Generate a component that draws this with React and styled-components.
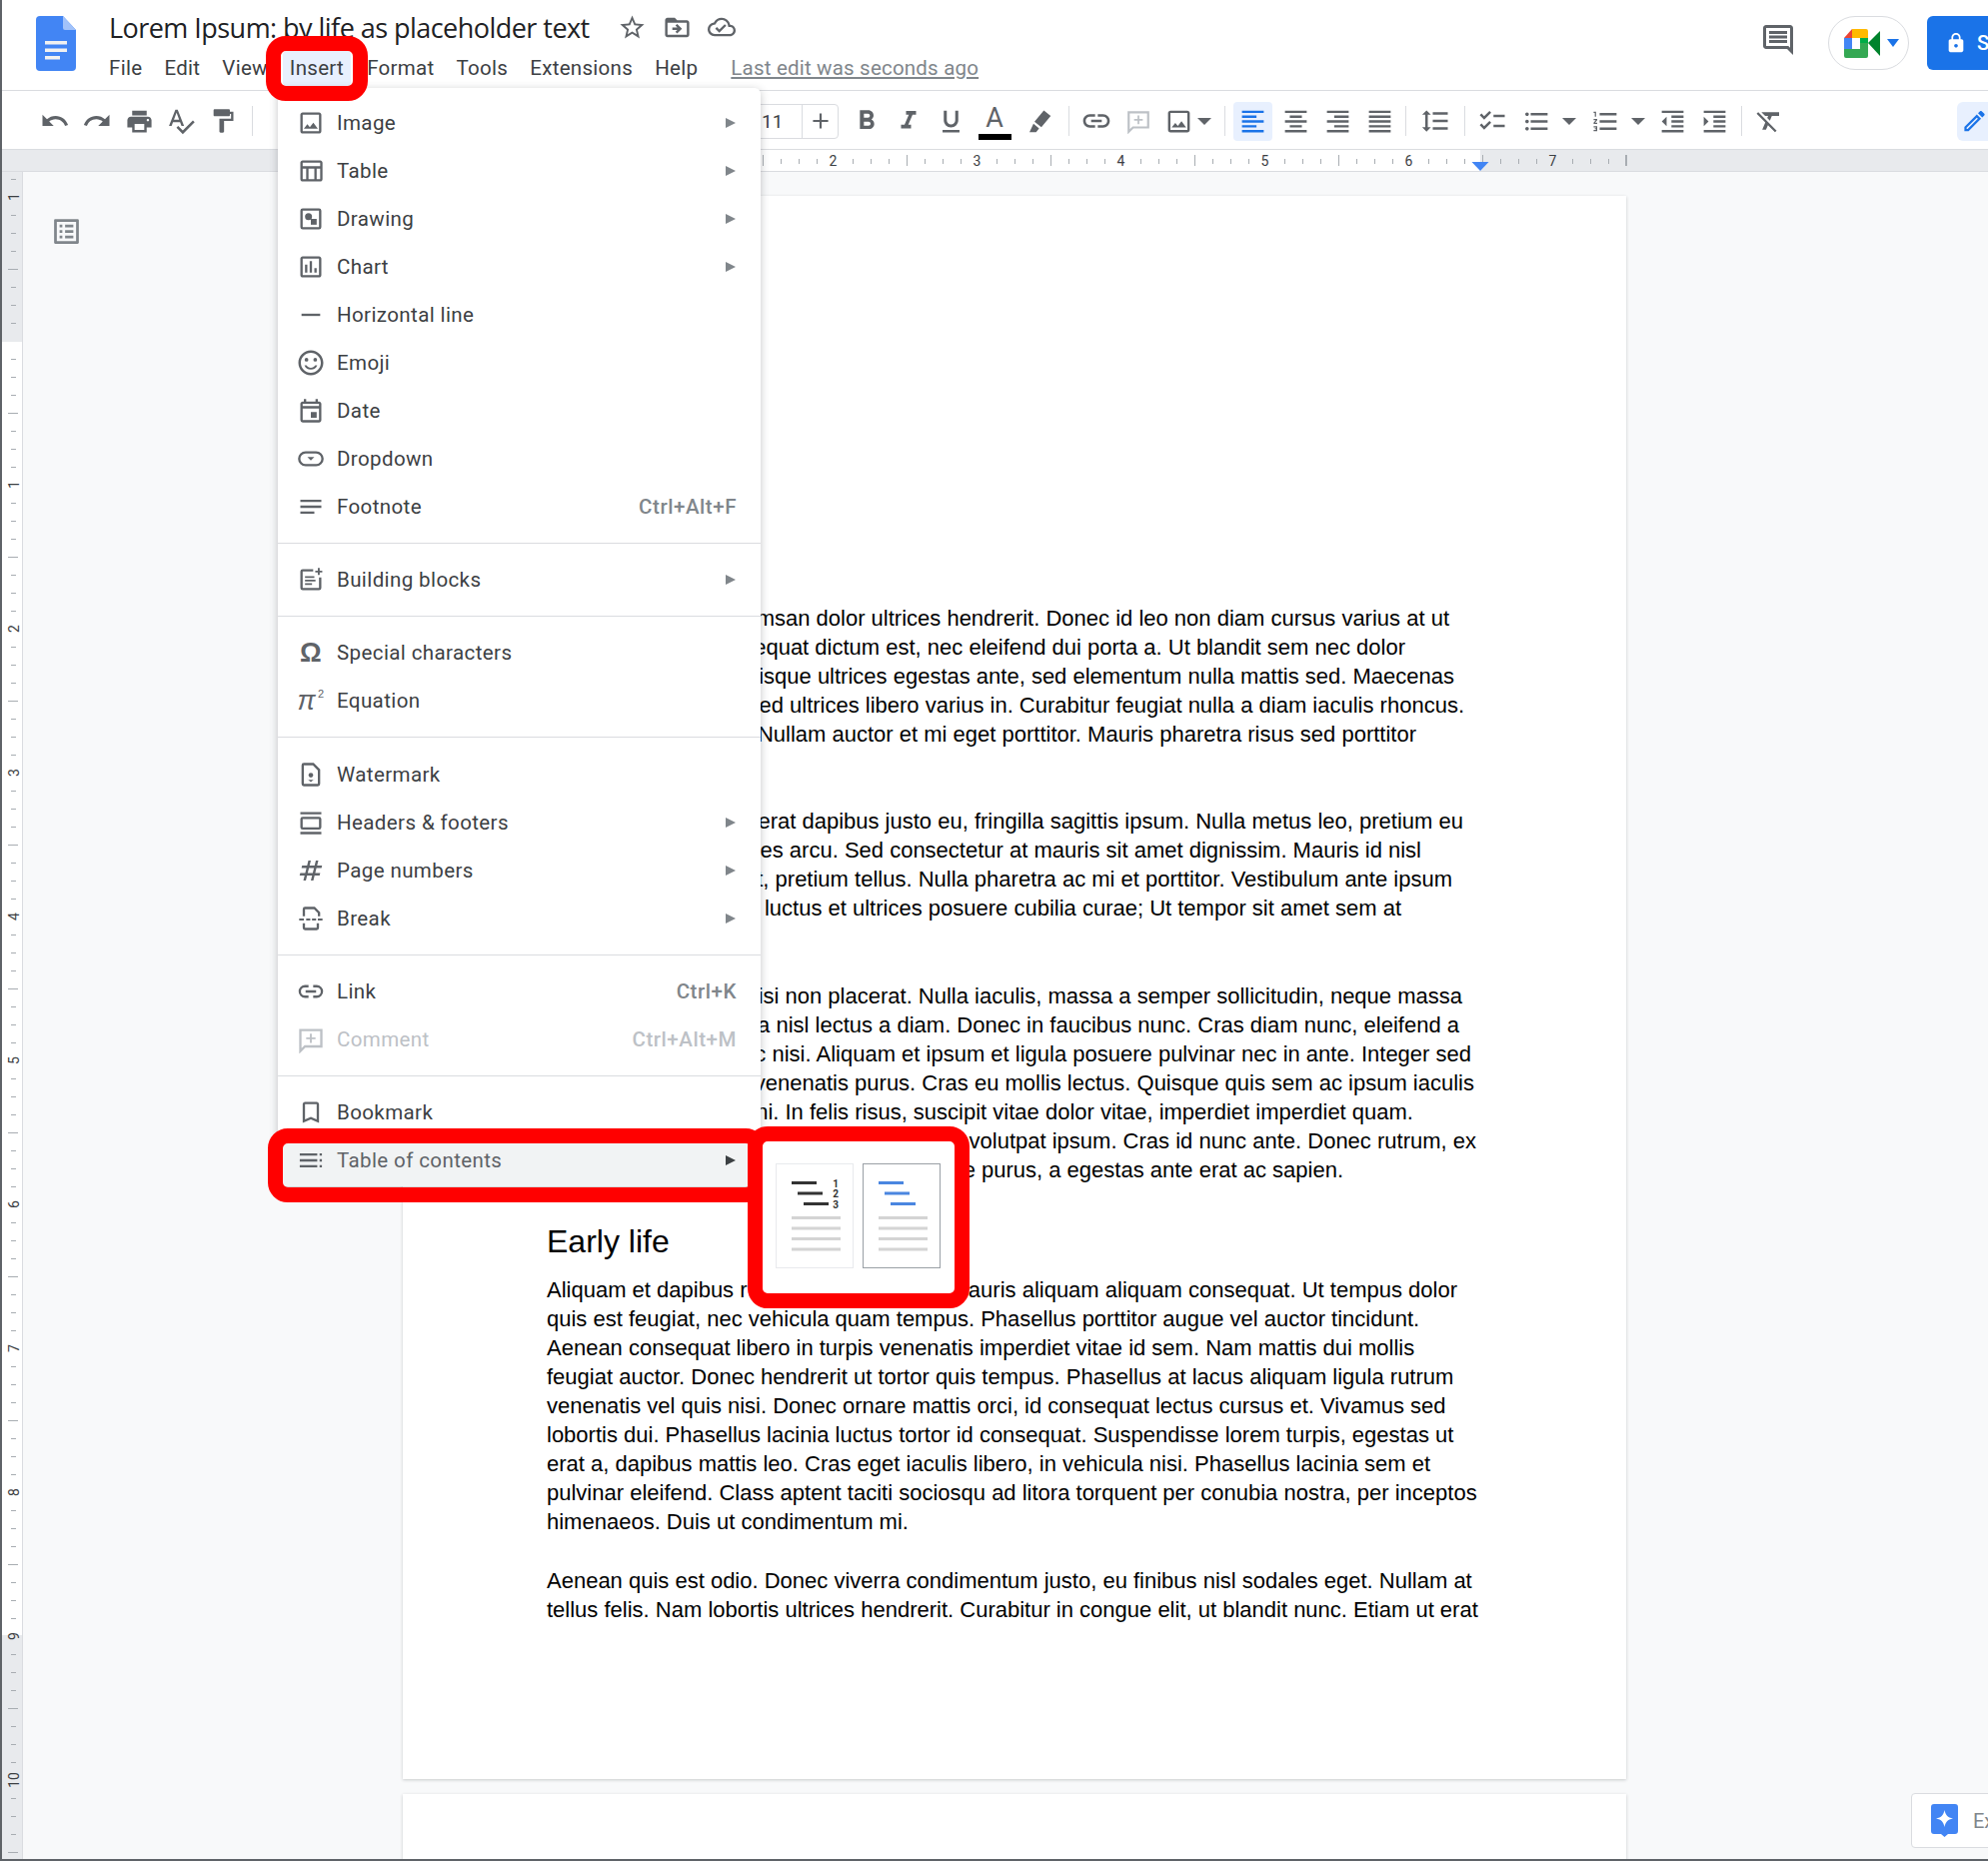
import React from "react";
import styled, { createGlobalStyle } from "styled-components";
import {
  MdUndo, MdRedo, MdPrint, MdSpellcheck, MdFormatPaint, MdFormatBold, MdFormatItalic,
  MdFormatUnderlined, MdLink, MdOutlineImage, MdFormatAlignLeft, MdFormatAlignCenter,
  MdFormatAlignRight, MdFormatAlignJustify, MdFormatLineSpacing, MdChecklist,
  MdFormatListBulleted, MdFormatListNumbered, MdFormatIndentDecrease, MdFormatIndentIncrease,
  MdFormatClear, MdStarBorder, MdDriveFileMoveOutline, MdOutlineCloudDone, MdOutlineComment,
  MdOutlineEdit, MdLock, MdOutlineListAlt, MdOutlineTableChart, MdOutlineInsertChart,
  MdHorizontalRule, MdOutlineSentimentSatisfied, MdOutlineEvent, MdNotes, MdNumbers,
  MdOutlineBookmarkBorder, MdAdd,
} from "react-icons/md";

const GlobalStyle = createGlobalStyle`
  html, body {
    margin: 0;
    padding: 0;
    overflow: hidden;
    background: #f8f9fa;
  }
  * { box-sizing: border-box; }
`;

const Screen = styled.div`
  position: relative;
  width: 1989px;
  height: 1862px;
  overflow: hidden;
  display: flex;
  flex-direction: column;
  background: #f8f9fa;
  border-left: 2px solid #5f6368;
  border-bottom: 2px solid #5f6368;
  font-family: Roboto, "Liberation Sans", sans-serif;
`;

/* title bar */
const TopBar = styled.header`
  flex: none;
  height: 91px;
  display: flex;
  background: #fff;
  border-bottom: 1px solid #dadce0;
  padding: 16px 0 0 34px;
`;

const TitleCol = styled.div`
  margin-left: 33px;
  display: flex;
  flex-direction: column;
`;

const TitleRow = styled.div`
  display: flex;
  align-items: center;
  height: 24px;
  margin-top: -1px;
  margin-bottom: 1px;
  color: #5f6368;
`;

const Title = styled.div`
  font: 400 27px "Open Sans", sans-serif;
  letter-spacing: -0.54px;
  color: #202124;
  margin-right: 20px;
  white-space: nowrap;
`;

const TitleIcon = styled.span`
  width: 45px;
  display: flex;
  justify-content: center;
`;

const MenuBar = styled.nav`
  display: flex;
  align-items: center;
  margin: 11px 0 0 -7px;
`;

const MenuItem = styled.div`
  height: 35px;
  line-height: 35px;
  padding: 0 7px;
  margin-right: ${(p) => (p.$open ? 9 : 8)}px;
  border-radius: 4px;
  font-size: 20.5px;
  letter-spacing: 0.3px;
  color: #3c4043;
  background: ${(p) => (p.$open ? "#e8f0fe" : "transparent")};
`;

const LastEdit = styled.div`
  margin: -2px 0 0 18px;
  font-size: 20.5px;
  letter-spacing: 0.2px;
  color: #80868b;
  text-decoration: underline;
  white-space: nowrap;
`;

const TopRight = styled.div`
  margin-left: auto;
  display: flex;
  align-items: flex-start;
  color: #5f6368;
`;

const CommentIcon = styled.div`
  margin: 6px 32px 0 0;
  display: flex;
`;

const MeetButton = styled.div`
  width: 81px;
  height: 54px;
  border: 1px solid #dadce0;
  border-radius: 27px;
  background: #fff;
  display: flex;
  align-items: center;
  padding-left: 15px;
  gap: 7px;
`;

const ShareButton = styled.div`
  width: 61px;
  margin-left: 18px;
  height: 54px;
  border-radius: 6px 0 0 6px;
  background: #1a73e8;
  color: #fff;
  display: flex;
  align-items: center;
  padding-left: 18px;
  gap: 10px;
  font-size: 20px;
  font-weight: 500;
  white-space: nowrap;

  svg {
    flex: none;
  }
`;

/* format toolbar */
const Toolbar = styled.div`
  flex: none;
  height: 59px;
  display: flex;
  align-items: center;
  padding: 2px 0 0 32px;
  background: #fff;
  border-bottom: 1px solid #dadce0;
  color: #5f6368;
`;

const ToolBtn = styled.div`
  flex: none;
  width: ${(p) => p.$w || 42}px;
  height: 39px;
  margin-left: ${(p) => p.$ml || 0}px;
  display: flex;
  align-items: center;
  justify-content: center;
  border-radius: 4px;
  color: ${(p) => (p.$active ? "#1a73e8" : p.$muted ? "#bdc1c6" : "#5f6368")};
  background: ${(p) => (p.$active ? "#e8f0fe" : "transparent")};
`;

const Sep = styled.div`
  flex: none;
  width: 1px;
  height: 30px;
  margin-left: ${(p) => p.$ml || 0}px;
  background: #dadce0;
`;

const Caret = styled.div`
  flex: none;
  width: 0;
  height: 0;
  margin-left: ${(p) => p.$ml || 0}px;
  border-left: 7px solid transparent;
  border-right: 7px solid transparent;
  border-top: 7px solid #5f6368;
`;

const FontBox = styled.div`
  flex: none;
  width: 119px;
  height: 35px;
  margin-left: 467px;
  display: flex;
  border: 1px solid #dadce0;
  border-radius: 4px;
  color: #3c4043;
`;

const FontValue = styled.div`
  width: 82px;
  padding-left: 41px;
  line-height: 33px;
  font-size: 19px;
  border-right: 1px solid #dadce0;
`;

const FontPlus = styled.div`
  flex: 1;
  display: flex;
  align-items: center;
  justify-content: center;
  color: #5f6368;
`;

const ColorBtn = styled(ToolBtn)`
  flex-direction: column;
  justify-content: flex-start;
  font-size: 27px;
  line-height: 32px;
`;

const ColorBar = styled.div`
  width: 33px;
  height: 6px;
  background: #000;
`;

const PencilBtn = styled.div`
  margin-left: auto;
  width: 31px;
  height: 39px;
  padding-left: 4px;
  display: flex;
  align-items: center;
  border-radius: 6px 0 0 6px;
  background: #e8f0fe;
  color: #1a73e8;
`;

const RulerStrip = styled.svg`
  flex: none;
  display: block;
`;

/* page area */
const Main = styled.div`
  flex: 1;
  min-height: 0;
  display: flex;
  overflow: hidden;
`;

const OutlineCol = styled.div`
  flex: none;
  width: 380px;
  padding: 43px 0 0 27px;
  color: #80868b;
`;

const Pages = styled.div`
  flex: none;
  width: 1224px;
  padding-top: 24px;
  display: flex;
  flex-direction: column;
  gap: 15px;
`;

const Sheet = styled.div`
  flex: none;
  height: ${(p) => p.$h}px;
  padding: ${(p) => p.$top || 0}px 0 0 144px;
  background: #fff;
  box-shadow: 0 1px 3px rgba(60, 64, 67, 0.25);
  font: 22px/29.1px "Liberation Sans", Arial, sans-serif;
  color: #000;
`;

const Paragraph = styled.div`
  margin-bottom: ${(p) => p.$after || 0}px;
`;

const Line = styled.div`
  white-space: nowrap;
  height: 29.1px;
  width: ${(p) => (p.$end ? `${p.$end}px` : "auto")};
  text-align: ${(p) => (p.$end ? "right" : "left")};
`;

const SplitLine = styled(Line)`
  display: flex;
  justify-content: space-between;
`;

const Heading = styled.h2`
  margin: 36px 0 12.3px;
  font: 400 32px/42px "Liberation Sans", Arial, sans-serif;
`;

/* insert menu */
const Menu = styled.div`
  position: absolute;
  left: 276px;
  top: 88px;
  width: 483px;
  padding-top: 11px;
  background: #fff;
  border-radius: 6px;
  box-shadow: 0 2px 8px rgba(60, 64, 67, 0.3);
  z-index: 3;
`;

const Row = styled.div`
  height: ${(p) => (p.$selected ? 50 : 48)}px;
  padding: ${(p) => (p.$selected ? "0 24px 2px 12px" : "0 24px 0 12px")};
  display: flex;
  align-items: center;
  background: ${(p) => (p.$selected ? "#f1f3f4" : "transparent")};
  color: ${(p) => (p.$disabled ? "#bdc1c6" : p.$selected ? "#5f6368" : "#3c4043")};
  font-size: 20.5px;
  letter-spacing: 0.4px;
`;

const RowIcon = styled.span`
  flex: none;
  width: 42px;
  margin-right: 5px;
  display: flex;
  align-items: center;
  justify-content: center;
  color: ${(p) => (p.$disabled ? "#bdc1c6" : "#5f6368")};
`;

const GlyphIcon = styled.span`
  font: ${(p) => p.$font};
  line-height: 28px;
`;

const SmallSup = styled.span`
  font: 11px "Liberation Sans", sans-serif;
  vertical-align: 12px;
  margin-left: 2px;
`;

const RowLabel = styled.span`
  flex: 1;
  white-space: nowrap;
`;

const Shortcut = styled.span`
  font-weight: 500;
  letter-spacing: 0.55px;
  color: ${(p) => (p.$disabled ? "#bdc1c6" : "#80868b")};
`;

const SubArrow = styled.span`
  width: 0;
  height: 0;
  margin-right: 1px;
  border-top: 5px solid transparent;
  border-bottom: 5px solid transparent;
  border-left: 10px solid ${(p) => (p.$dark ? "#3c4043" : "#80868b")};
`;

const MenuDivider = styled.div`
  height: 1px;
  margin: 12.1px 0;
  background: #dadce0;
`;

/* red annotation frames */
const RedFrame = styled.div`
  position: absolute;
  left: ${(p) => p.$x}px;
  top: ${(p) => p.$y}px;
  width: ${(p) => p.$w}px;
  height: ${(p) => p.$h}px;
  border: 15px solid #f00;
  border-radius: 20px;
  z-index: 4;
`;

const TocPanel = styled(RedFrame)`
  z-index: 5;
  background: #fff;
  padding: 22px 0 0 13px;
  display: flex;
  gap: 9px;
  align-items: flex-start;
`;

const Thumb = styled.div`
  width: 78px;
  height: 105px;
  border: 1px solid ${(p) => (p.$active ? "#9aa0a6" : "#e8eaed")};
  display: flex;
`;

const ExploreBox = styled.div`
  position: absolute;
  left: 1910px;
  top: 1794px;
  width: 120px;
  height: 55px;
  background: #fff;
  border: 1px solid #dadce0;
  border-radius: 4px;
  display: flex;
  align-items: center;
  padding-left: 19px;
  gap: 15px;
  font-size: 20px;
  color: #80868b;
  z-index: 2;
`;

function Svg({ children, size = 28 }) {
  return (
    <svg width={size} height={size} viewBox="0 0 24 24" fill="currentColor">
      {children}
    </svg>
  );
}

const line = { fill: "none", stroke: "currentColor", strokeWidth: 2 };

const DrawingIcon = () => (
  <Svg>
    <rect x="4" y="4" width="16" height="16" rx="1" {...line} />
    <circle cx="10" cy="10" r="3" />
    <rect x="12" y="12" width="5" height="5" />
  </Svg>
);
const DropdownIcon = () => (
  <Svg>
    <rect x="2" y="6.5" width="20" height="11" rx="5.5" {...line} />
    <path d="M9 10.5h6l-3 3z" />
  </Svg>
);
const BlocksIcon = () => (
  <Svg>
    <path d="M14 4H5a1 1 0 0 0-1 1v14a1 1 0 0 0 1 1h14a1 1 0 0 0 1-1v-9" {...line} />
    <path d="M7 9h8v1.6H7zM7 12h9v1.6H7zM7 15h6v1.6H7zM18 2h1.6v2.2h2.2v1.6h-2.2V8H18V5.800h-2.200V4.200H18z" />
  </Svg>
);
const WatermarkIcon = () => (
  <Svg>
    <path d="M6 3h8l5 5v12a1 1 0 0 1-1 1H6a1 1 0 0 1-1-1V4a1 1 0 0 1 1-1z" {...line} />
    <circle cx="12" cy="12.500" r="2" />
    <path d="M8.500 15.500 12 18.500l3.500-3-1.500 1H10z" />
  </Svg>
);
const HeadersIcon = () => (
  <Svg>
    <path d="M3 3h18v2H3zM3 20h18v2H3z" />
    <rect x="4" y="8" width="16" height="9" rx="1" {...line} />
  </Svg>
);
const BreakIcon = () => (
  <Svg>
    <path d="M6 10V4a1 1 0 0 1 1-1h8l4 4v3" {...line} />
    <path d="M6 16v4a1 1 0 0 0 1 1h10a1 1 0 0 0 1-1v-4" {...line} />
    <path d="M2 12h4v1.800H2zM8 12h3.500v1.800H8zM13 12h3.500v1.800H13zM18 12h4v1.800h-4z" />
  </Svg>
);
const LinkIcon = () => (
  <Svg>
    <path d="M10 7.500H7a4.500 4.500 0 0 0 0 9h3M14 7.500h3a4.500 4.500 0 0 1 0 9h-3M7.500 12h9" {...line} />
  </Svg>
);
const CommentAddIcon = ({ size = 28 }) => (
  <Svg size={size}>
    <path d="M3 4h18v14H7l-4 4z" {...line} />
    <path d="M11.200 7h1.600v3.200H16v1.600h-3.200V15h-1.600v-3.200H8v-1.600h3.200z" />
  </Svg>
);
const TocIcon = () => (
  <Svg>
    <path d="M2.500 6h15v2h-15zM2.500 11h15v2h-15zM2.500 16h15v2h-15zM19.500 6h2v2h-2zM19.500 11h2v2h-2zM19.500 16h2v2h-2z" />
  </Svg>
);
const MarkerIcon = () => (
  <Svg size={30}>
    <path d="M15.500 3.500 21 8l-7.500 9-5.500-4.500zM7.200 14.200l4.500 3.700-2.400 3H4z" />
  </Svg>
);

const DocsLogo = () => (
  <svg width="40" height="55" viewBox="0 0 40 55" style={{ flex: "none" }}>
    <path d="M4 0h23l13 14v37a4 4 0 0 1-4 4H4a4 4 0 0 1-4-4V4a4 4 0 0 1 4-4z" fill="#4285f4" />
    <path d="M27 0l13 14H29a2 2 0 0 1-2-2z" fill="#a1c2fa" />
    <path d="M9 25h22v3.500H9zM9 32.500h22V36H9zM9 40h15v3.500H9z" fill="#f1f1f1" />
  </svg>
);

const MeetLogo = () => (
  <svg width="36" height="29" viewBox="0 0 36 29">
    <path d="M8 0h14a2 2 0 0 1 2 2v11l-8 0V9H8z" fill="#ffba00" />
    <path d="M0 9l8-9v9z" fill="#ea4335" />
    <rect y="9" width="8" height="11" fill="#4285f4" />
    <path d="M0 20h16v-7h8v14a2 2 0 0 1-2 2H2a2 2 0 0 1-2-2z" fill="#34a853" />
    <path d="M24 14l12-12v25z" fill="#00832d" />
    <path d="M16 9h8v5h-8z" fill="#00ac47" />
    <rect x="8" y="9" width="8" height="11" fill="#fff" />
  </svg>
);

const ExploreIcon = () => (
  <svg width="27" height="33" viewBox="0 0 27 33" style={{ flex: "none" }}>
    <path d="M3 0h21a3 3 0 0 1 3 3v24a3 3 0 0 1-3 3h-7l-3.500 3L10 30H3a3 3 0 0 1-3-3V3a3 3 0 0 1 3-3z" fill="#4285f4" />
    <path d="M13.500 6c1 5 3 7.500 8.500 8.500-5.500 1-7.500 3.500-8.500 8.500-1-5-3-7.500-8.500-8.500C10.500 13.500 12.500 11 13.500 6z" fill="#fff" />
  </svg>
);

function ThumbArt({ numbered }) {
  const colour = numbered ? "#333" : "#4a86e0";
  return (
    <svg width="76" height="103" viewBox="0 0 76 103">
      <rect x="15" y="17" width="25" height="3" fill={colour} />
      <rect x="21" y="27.500" width="25" height="3" fill={colour} />
      <rect x="27" y="38" width="25" height="3" fill={colour} />
      {numbered && (
        <g fontFamily="Roboto" fontWeight="700" fontSize="10" fill="#333" textAnchor="middle">
          <text x="59" y="22.500">1</text>
          <text x="59" y="33">2</text>
          <text x="59" y="43.500">3</text>
        </g>
      )}
      {[52, 62.500, 73, 83.500].map((y) => (
        <rect key={y} x="15" y={y} width="49" height="3" fill="#d4d4d4" />
      ))}
    </svg>
  );
}

function HorizontalRuler() {
  const ticks = [];
  for (let x = 403; x <= 1627; x += 18) {
    const step = (x - 547) / 18;
    const mod = ((step % 8) + 8) % 8;
    if (mod === 0) continue;
    const long = mod === 4;
    ticks.push(<rect key={x} x={x} y={long ? 5 : 9} width="1" height={long ? 11 : 5} fill="#a8adb2" />);
  }
  return (
    <RulerStrip width="1987" height="22" viewBox="2 150 1987 22" preserveAspectRatio="xMinYMin">
      <g transform="translate(0 150)">
        <rect x="0" width="1989" height="21" fill="#e8eaed" />
        <rect x="547" width="934" height="21" fill="#fff" />
        <rect y="21" x="0" width="1989" height="1" fill="#dadce0" />
        {ticks}
        <rect x="1626" y="5" width="1" height="11" fill="#a8adb2" />
        {[1, 2, 3, 4, 5, 6, 7].map((n) => (
          <text key={n} x={545.5 + n * 144} y="16" fontFamily="Roboto" fontSize="14" fill="#3c4043" textAnchor="middle">
            {n}
          </text>
        ))}
        <path d="M1472.500 12h17l-8.500 9z" fill="#4285f4" />
      </g>
    </RulerStrip>
  );
}

function VerticalRuler() {
  const ticks = [];
  for (let y = 179; y <= 1860; y += 18) {
    const mod = ((y - 341) / 18 % 8 + 8) % 8;
    if (mod === 0) continue;
    const long = mod === 4;
    ticks.push(<rect key={y} x={long ? 8 : 11} y={y} width={long ? 10 : 5} height="1" fill="#a8adb2" />);
  }
  const labels = [[197, 1]];
  for (let n = 1; n <= 10; n++) labels.push([341 + n * 144, n]);
  return (
    <RulerStrip width="21" height="1688" viewBox="2 172 21 1688" style={{ alignSelf: "flex-start" }}>
      <rect x="0" y="172" width="22" height="1700" fill="#e8eaed" />
      <rect x="2" y="342" width="20" height="1294" fill="#fff" />
      <rect x="22" y="172" width="1" height="1700" fill="#dadce0" />
      {ticks}
      {labels.map(([y, n]) => (
        <text
          key={y}
          transform={`translate(19 ${y}) rotate(-90)`}
          fontFamily="Roboto"
          fontSize="14"
          fill="#3c4043"
          textAnchor="middle"
        >
          {n}
        </text>
      ))}
    </RulerStrip>
  );
}

const menuGroups = [
  [
    { label: "Image", icon: <MdOutlineImage size={28} />, sub: true },
    { label: "Table", icon: <MdOutlineTableChart size={28} />, sub: true },
    { label: "Drawing", icon: <DrawingIcon />, sub: true },
    { label: "Chart", icon: <MdOutlineInsertChart size={28} />, sub: true },
    { label: "Horizontal line", icon: <MdHorizontalRule size={28} /> },
    { label: "Emoji", icon: <MdOutlineSentimentSatisfied size={30} /> },
    { label: "Date", icon: <MdOutlineEvent size={28} /> },
    { label: "Dropdown", icon: <DropdownIcon /> },
    { label: "Footnote", icon: <MdNotes size={28} />, shortcut: "Ctrl+Alt+F" },
  ],
  [{ label: "Building blocks", icon: <BlocksIcon />, sub: true }],
  [
    { label: "Special characters", icon: <GlyphIcon $font={'700 27px "Liberation Sans", sans-serif'}>Ω</GlyphIcon> },
    {
      label: "Equation",
      icon: (
        <GlyphIcon $font={'italic 27px "Liberation Sans", sans-serif'}>
          π<SmallSup>2</SmallSup>
        </GlyphIcon>
      ),
    },
  ],
  [
    { label: "Watermark", icon: <WatermarkIcon /> },
    { label: "Headers & footers", icon: <HeadersIcon />, sub: true },
    { label: "Page numbers", icon: <MdNumbers size={30} />, sub: true },
    { label: "Break", icon: <BreakIcon />, sub: true },
  ],
  [
    { label: "Link", icon: <LinkIcon />, shortcut: "Ctrl+K" },
    { label: "Comment", icon: <CommentAddIcon />, shortcut: "Ctrl+Alt+M", disabled: true },
  ],
  [
    { label: "Bookmark", icon: <MdOutlineBookmarkBorder size={28} /> },
    { label: "Table of contents", icon: <TocIcon />, sub: true, selected: true },
  ],
];

const textBlocks = [
  [
    ["msan dolor ultrices hendrerit. Donec id leo non diam cursus varius at ut", 903],
    ["equat dictum est, nec eleifend dui porta a. Ut blandit sem nec dolor", 859],
    ["isque ultrices egestas ante, sed elementum nulla mattis sed. Maecenas", 908],
    ["ed ultrices libero varius in. Curabitur feugiat nulla a diam iaculis rhoncus.", 918],
    ["Nullam auctor et mi eget porttitor. Mauris pharetra risus sed porttitor", 870],
  ],
  [
    ["erat dapibus justo eu, fringilla sagittis ipsum. Nulla metus leo, pretium eu", 917],
    ["es arcu. Sed consectetur at mauris sit amet dignissim. Mauris id nisl", 875],
    ["t, pretium tellus. Nulla pharetra ac mi et porttitor. Vestibulum ante ipsum", 906],
    ["luctus et ultrices posuere cubilia curae; Ut tempor sit amet sem at", 855],
  ],
  [
    ["isi non placerat. Nulla iaculis, massa a semper sollicitudin, neque massa", 916],
    ["a nisl lectus a diam. Donec in faucibus nunc. Cras diam nunc, eleifend a", 913],
    ["c nisi. Aliquam et ipsum et ligula posuere pulvinar nec in ante. Integer sed", 925],
    ["venenatis purus. Cras eu mollis lectus. Quisque quis sem ac ipsum iaculis", 928],
    ["ni. In felis risus, suscipit vitae dolor vitae, imperdiet imperdiet quam.", 867],
    ["volutpat ipsum. Cras id nunc ante. Donec rutrum, ex", 930],
    ["e purus, a egestas ante erat ac sapien.", 797],
  ],
];

const earlyLife = [
  "quis est feugiat, nec vehicula quam tempus. Phasellus porttitor augue vel auctor tincidunt.",
  "Aenean consequat libero in turpis venenatis imperdiet vitae id sem. Nam mattis dui mollis",
  "feugiat auctor. Donec hendrerit ut tortor quis tempus. Phasellus at lacus aliquam ligula rutrum",
  "venenatis vel quis nisi. Donec ornare mattis orci, id consequat lectus cursus et. Vivamus sed",
  "lobortis dui. Phasellus lacinia luctus tortor id consequat. Suspendisse lorem turpis, egestas ut",
  "erat a, dapibus mattis leo. Cras eget iaculis libero, in vehicula nisi. Phasellus lacinia sem et",
  "pulvinar eleifend. Class aptent taciti sociosqu ad litora torquent per conubia nostra, per inceptos",
  "himenaeos. Duis ut condimentum mi.",
];

const lastLines = [
  "Aenean quis est odio. Donec viverra condimentum justo, eu finibus nisl sodales eget. Nullam at",
  "tellus felis. Nam lobortis ultrices hendrerit. Curabitur in congue elit, ut blandit nunc. Etiam ut erat",
];

export default function App() {
  return (
    <Screen>
      <GlobalStyle />
      <TopBar>
        <DocsLogo />
        <TitleCol>
          <TitleRow>
            <Title>Lorem Ipsum: by life as placeholder text</Title>
            <TitleIcon><MdStarBorder size={29} /></TitleIcon>
            <TitleIcon><MdDriveFileMoveOutline size={29} /></TitleIcon>
            <TitleIcon><MdOutlineCloudDone size={28} /></TitleIcon>
          </TitleRow>
          <MenuBar>
            <MenuItem>File</MenuItem>
            <MenuItem>Edit</MenuItem>
            <MenuItem>View</MenuItem>
            <MenuItem $open>Insert</MenuItem>
            <MenuItem>Format</MenuItem>
            <MenuItem>Tools</MenuItem>
            <MenuItem>Extensions</MenuItem>
            <MenuItem>Help</MenuItem>
            <LastEdit>Last edit was seconds ago</LastEdit>
          </MenuBar>
        </TitleCol>
        <TopRight>
          <CommentIcon><MdOutlineComment size={36} /></CommentIcon>
          <MeetButton>
            <MeetLogo />
            <svg width="12" height="8" viewBox="0 0 12 8"><path d="M0 0h12L6 8z" fill="#1a73e8" /></svg>
          </MeetButton>
          <ShareButton>
            <MdLock size={22} />
            Share
          </ShareButton>
        </TopRight>
      </TopBar>

      <Toolbar>
        <ToolBtn><MdUndo size={30} /></ToolBtn>
        <ToolBtn><MdRedo size={30} /></ToolBtn>
        <ToolBtn><MdPrint size={29} /></ToolBtn>
        <ToolBtn><MdSpellcheck size={30} /></ToolBtn>
        <ToolBtn><MdFormatPaint size={28} /></ToolBtn>
        <Sep $ml={8} />
        <FontBox>
          <FontValue>11</FontValue>
          <FontPlus><MdAdd size={26} /></FontPlus>
        </FontBox>
        <ToolBtn $ml={7}><MdFormatBold size={32} /></ToolBtn>
        <ToolBtn><MdFormatItalic size={30} /></ToolBtn>
        <ToolBtn><MdFormatUnderlined size={29} /></ToolBtn>
        <ColorBtn $ml={2}>
          A
          <ColorBar />
        </ColorBtn>
        <ToolBtn $ml={3}><MarkerIcon /></ToolBtn>
        <Sep $ml={8} />
        <ToolBtn $ml={6}><MdLink size={32} /></ToolBtn>
        <ToolBtn $muted><CommentAddIcon size={26} /></ToolBtn>
        <ToolBtn $w={38}><MdOutlineImage size={29} /></ToolBtn>
        <Caret />
        <Sep $ml={13} />
        <ToolBtn $ml={8} $w={39} $active><MdFormatAlignLeft size={29} /></ToolBtn>
        <ToolBtn $ml={2}><MdFormatAlignCenter size={29} /></ToolBtn>
        <ToolBtn><MdFormatAlignRight size={29} /></ToolBtn>
        <ToolBtn><MdFormatAlignJustify size={29} /></ToolBtn>
        <Sep $ml={5} />
        <ToolBtn $ml={8}><MdFormatLineSpacing size={30} /></ToolBtn>
        <Sep $ml={8} />
        <ToolBtn $ml={6}><MdChecklist size={30} /></ToolBtn>
        <ToolBtn $ml={2}><MdFormatListBulleted size={29} /></ToolBtn>
        <Caret $ml={5} />
        <ToolBtn $ml={8}><MdFormatListNumbered size={29} /></ToolBtn>
        <Caret $ml={5} />
        <ToolBtn $ml={6}><MdFormatIndentDecrease size={29} /></ToolBtn>
        <ToolBtn><MdFormatIndentIncrease size={29} /></ToolBtn>
        <Sep $ml={6} />
        <ToolBtn $ml={6}><MdFormatClear size={30} /></ToolBtn>
        <PencilBtn><MdOutlineEdit size={30} /></PencilBtn>
      </Toolbar>

      <HorizontalRuler />

      <Main>
        <VerticalRuler />
        <OutlineCol><MdOutlineListAlt size={33} /></OutlineCol>
        <Pages>
          <Sheet $h={1584} $top={407.5}>
            <Paragraph $after={58.2}>
              {textBlocks[0].map(([text, end]) => <Line key={text} $end={end}>{text}</Line>)}
            </Paragraph>
            <Paragraph $after={58.2}>
              {textBlocks[1].map(([text, end]) => <Line key={text} $end={end}>{text}</Line>)}
            </Paragraph>
            <Paragraph>
              {textBlocks[2].map(([text, end]) => <Line key={text} $end={end}>{text}</Line>)}
            </Paragraph>
            <Heading>Early life</Heading>
            <Paragraph $after={29.1}>
              <SplitLine $end={911}>
                <span>Aliquam et dapibus r</span>
                <span>auris aliquam aliquam consequat. Ut tempus dolor</span>
              </SplitLine>
              {earlyLife.map((text) => <Line key={text}>{text}</Line>)}
            </Paragraph>
            <Paragraph>
              {lastLines.map((text) => <Line key={text}>{text}</Line>)}
            </Paragraph>
          </Sheet>
          <Sheet $h={120} />
        </Pages>
      </Main>

      <Menu>
        {menuGroups.map((group, i) => (
          <React.Fragment key={i}>
            {i > 0 && <MenuDivider />}
            {group.map((item) => (
              <Row key={item.label} $disabled={item.disabled} $selected={item.selected}>
                <RowIcon $disabled={item.disabled}>{item.icon}</RowIcon>
                <RowLabel>{item.label}</RowLabel>
                {item.shortcut && <Shortcut $disabled={item.disabled}>{item.shortcut}</Shortcut>}
                {item.sub && <SubArrow $dark={item.selected} />}
              </Row>
            ))}
          </React.Fragment>
        ))}
      </Menu>

      <RedFrame $x={264} $y={36} $w={102} $h={65} />
      <RedFrame $x={266} $y={1129} $w={498} $h={74} />
      <TocPanel $x={746} $y={1127} $w={222} $h={182}>
        <Thumb><ThumbArt numbered /></Thumb>
        <Thumb $active><ThumbArt /></Thumb>
      </TocPanel>

      <ExploreBox>
        <ExploreIcon />
        Explore
      </ExploreBox>
    </Screen>
  );
}
